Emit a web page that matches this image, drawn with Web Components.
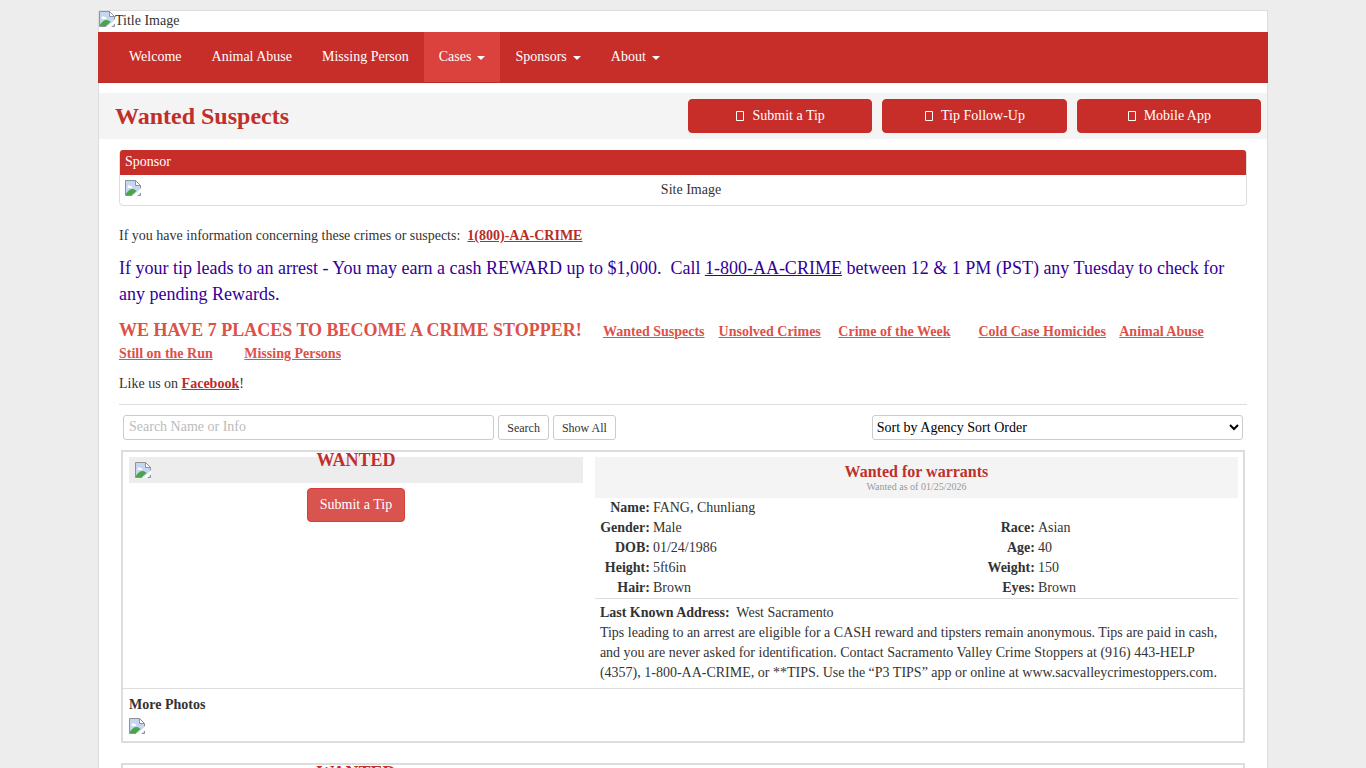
<!DOCTYPE html>
<html lang="en">
<head>
<meta charset="utf-8">
<meta name="viewport" content="width=device-width, initial-scale=1">
<title>Wanted Suspects</title>
<style>
    html {
        --red: #c72d29;
        --red-dark: #b5302b;
        --red-light: #db413d;
        --line: #ddd;
        --shade: #f4f4f4;
        background: #ededed;
    }
    body {
        margin: 0;
        color: #333;
        font: 14px/20px "Liberation Serif", "Times New Roman", serif;
    }
</style>
</head>
<body>

<site-frame>
    <site-nav slot="nav">
        <nav-item>Welcome</nav-item>
        <nav-item>Animal Abuse</nav-item>
        <nav-item>Missing Person</nav-item>
        <nav-item menu active>Cases</nav-item>
        <nav-item menu>Sponsors</nav-item>
        <nav-item menu>About</nav-item>
    </site-nav>
    <page-heading slot="heading">
        Wanted Suspects
        <tip-button slot="actions" icon block>Submit a Tip</tip-button>
        <tip-button slot="actions" icon block>Tip Follow-Up</tip-button>
        <tip-button slot="actions" icon block>Mobile App</tip-button>
    </page-heading>
    <sponsor-panel><span slot="title">Sponsor</span>Site Image</sponsor-panel>
    <crime-notice></crime-notice>
    <search-bar></search-bar>
    <suspect-card>
        <span slot="crime">Wanted for warrants</span>
        <span slot="since">Wanted as of 01/25/2026</span>
        <span slot="name">FANG, Chunliang</span>
        <span slot="gender">Male</span>
        <span slot="race">Asian</span>
        <span slot="dob">01/24/1986</span>
        <span slot="age">40</span>
        <span slot="height">5ft6in</span>
        <span slot="weight">150</span>
        <span slot="hair">Brown</span>
        <span slot="eyes">Brown</span>
        <span slot="address">West Sacramento</span>
        Tips leading to an arrest are eligible for a CASH reward and tipsters remain anonymous. Tips are paid in cash, and you are never asked for identification. Contact Sacramento Valley Crime Stoppers at (916) 443-HELP (4357), 1-800-AA-CRIME, or **TIPS. Use the “P3 TIPS” app or online at www.sacvalleycrimestoppers.com.
    </suspect-card>
    <suspect-card></suspect-card>
</site-frame>

<!-- page frame -->
<template id="site-frame">
    <style>
        :host {
            display: block;
            box-sizing: border-box;
            max-width: 1170px;
            margin: 10px auto 0;
            border: 1px solid var(--line);
            background: #fff;
        }
        .banner { display: flex; height: 21px; }
        .banner span { line-height: 19px; }
        main { padding: 11px 20px 20px; }
    </style>
    <header>
        <div class="banner"><missing-image></missing-image><span>Title Image</span></div>
        <slot name="nav"></slot>
    </header>
    <slot name="heading"></slot>
    <main><slot></slot></main>
</template>

<!-- placeholder for a picture that did not load -->
<template id="missing-image">
    <style>
        :host { display: block; flex: none; width: 16px; height: 16px; }
        svg { display: block; }
    </style>
    <svg width="16" height="16" viewBox="0 0 16 16" aria-hidden="true">
        <path d="M.5.5h10l5 5v10H.5z" fill="#c5d6f3"/>
        <path d="M2.500 7c0-2 2.500-2.500 3-1 2-.5 2.500 2 1 2H3c-.5 0-.5-.5-.5-1z" fill="#fff"/>
        <path d="M1 15v-1.500C3 11 5 9 7.500 9c2 0 3 1 4 2l-4.500 4z" fill="#4aa545"/>
        <path d="M.5 15.500V.5h10l5 5v3M.5 15.500H7M12.500 15.500h3V13" fill="none" stroke="#8d939b"/>
        <path d="M10.500.5v5h5z" fill="#fff" stroke="#8d939b"/>
        <path d="M16 8.500 7.500 16H12l4-4z" fill="#fff"/>
    </svg>
</template>

<!-- main menu -->
<template id="site-nav">
    <style>
        :host {
            display: block;
            margin: 0 -1px;
            background: var(--red);
            border-bottom: 1px solid var(--red-dark);
        }
        nav { display: flex; padding: 0 16px; }
    </style>
    <nav><slot></slot></nav>
</template>

<template id="nav-item">
    <style>
        :host { display: block; }
        a {
            display: flex;
            align-items: center;
            gap: 6px;
            padding: 15px;
            color: #fff;
            text-decoration: none;
        }
        :host([active]) a { background: var(--red-light); }
        i { display: none; border: 4px solid transparent; border-top-color: #fff; border-bottom: 0; }
        :host([menu]) i { display: block; margin-top: 2px; }
    </style>
    <a href="#"><slot></slot><i></i></a>
</template>

<!-- grey bar with the title and the three actions -->
<template id="page-heading">
    <style>
        :host {
            display: grid;
            grid-template-columns: 1fr 1fr;
            align-items: center;
            margin-top: 10px;
            background: var(--shade);
        }
        h1 {
            margin: 0;
            padding-left: 16px;
            color: #c02f2b;
            font-size: 24px;
            line-height: 26px;
        }
        .actions {
            display: grid;
            grid-template-columns: repeat(3, 1fr);
            gap: 10px;
            padding: 6px 6px 6px 5px;
        }
    </style>
    <h1><slot></slot></h1>
    <div class="actions"><slot name="actions"></slot></div>
</template>

<template id="tip-button">
    <style>
        :host { display: inline-block; }
        button {
            display: flex;
            align-items: center;
            justify-content: center;
            width: 100%;
            padding: 6px 12px;
            border: 1px solid #d43f3a;
            border-radius: 4px;
            background: #d9534f;
            color: #fff;
            font: inherit;
        }
        :host([block]) button { border-color: var(--red); background: var(--red); }
        svg { display: none; margin: 0 8px 0 1px; }
        :host([icon]) svg { display: block; }
    </style>
    <button type="button">
        <svg width="8" height="10" aria-hidden="true"><path d="M.5.5h7v9h-7z" fill="none" stroke="#fff"/></svg>
        <slot></slot>
    </button>
</template>

<!-- sponsor box -->
<template id="sponsor-panel">
    <style>
        :host {
            display: block;
            margin-bottom: 20px;
            border: 1px solid var(--line);
            border-radius: 4px;
        }
        header {
            margin: -1px 0 0;
            padding: 2px 5px 3px;
            border-radius: 3px 3px 0 0;
            background: var(--red);
            color: #fff;
        }
        div { display: flex; padding: 5px; }
        span { flex: 1; text-align: center; }
    </style>
    <header><slot name="title"></slot></header>
    <div><missing-image></missing-image><span><slot></slot></span></div>
</template>

<!-- text over the list -->
<template id="crime-notice">
    <style>
        :host { display: block; border-bottom: 1px solid var(--line); padding-bottom: 10px; }
        p { margin: 0 0 9px; }
        p:last-child { margin: 0; }
        a { color: #b92c28; font-weight: bold; }
        .reward { margin-bottom: 10px; color: #309; font-size: 18px; line-height: 26px; }
        .reward a { color: inherit; font-weight: normal; }
        .places { line-height: 22px; }
        .places, .places a { color: #dc5148; font-weight: bold; }
        .places a { white-space: nowrap; }
        .places strong { font-size: 18px; line-height: 26px; }
    </style>
    <p>If you have information concerning these crimes or suspects:&nbsp; <a href="#">1(800)-AA-CRIME</a></p>
    <p class="reward">If your tip leads to an arrest - You may earn a cash REWARD up to $1,000.&nbsp; Call <a href="#">1-800-AA-CRIME</a> between 12 &amp; 1 PM (PST) any Tuesday to check for any pending Rewards.</p>
    <p class="places"><strong>WE HAVE 7 PLACES TO BECOME A CRIME STOPPER!&nbsp;&nbsp;&nbsp;&nbsp;</strong> <a href="#">Wanted Suspects</a>&nbsp;&nbsp;&nbsp; <a href="#">Unsolved Crimes</a>&nbsp;&nbsp;&nbsp;&nbsp; <a href="#">Crime of the Week</a>&nbsp;&nbsp;&nbsp;&nbsp;&nbsp;&nbsp;&nbsp; <a href="#">Cold Case Homicides</a>&nbsp;&nbsp;&nbsp; <a href="#">Animal Abuse</a> <a href="#">Still on the Run</a>&nbsp;&nbsp;&nbsp;&nbsp;&nbsp;&nbsp;&nbsp;&nbsp; <a href="#">Missing Persons</a></p>
    <p>Like us on <a href="#">Facebook</a>!</p>
</template>

<!-- search and sort -->
<template id="search-bar">
    <style>
        :host { display: block; margin: 10px 4px; }
        form { display: flex; gap: 4px; }
        input, select, button {
            box-sizing: border-box;
            height: 25px;
            margin: 0;
            border: 1px solid #ccc;
            border-radius: 3px;
            background: #fff;
            font: inherit;
        }
        input, select { width: calc(33.33% - 2px); }
        input { padding: 0 5px 2px; color: #333; }
        input::placeholder { color: #bbb; }
        select { margin-left: auto; padding: 0; color: #000; }
        button { padding: 0 8px; color: #333; font-size: 12px; }
    </style>
    <form>
        <input type="text" placeholder="Search Name or Info" aria-label="Search Name or Info">
        <button type="button">Search</button>
        <button type="button">Show All</button>
        <select aria-label="Sort order">
            <option>Sort by Agency Sort Order</option>
        </select>
    </form>
</template>

<!-- one wanted person -->
<template id="suspect-card">
    <style>
        :host { display: block; margin: 0 2px 20px; border: 2px solid var(--line); }
        .row { display: grid; grid-template-columns: 41.6% 1fr; min-height: 236px; }
        .photo, .info { min-width: 0; padding: 5px 6px; }
        .info { padding-right: 5px; }
        .photo { text-align: center; }
        .frame { position: relative; height: 16px; margin-bottom: 5px; padding: 5px 6px; background: #ededed; }
        .frame b {
            position: absolute;
            top: -7px;
            left: 0;
            right: 0;
            color: #c02f2b;
            font-size: 18px;
        }
        header { padding: 5px 5px 6px; background: var(--shade); text-align: center; }
        h2 { margin: 0; color: #c02f2b; font-size: 16px; line-height: 20px; }
        small { display: block; color: #999; font-size: 10px; line-height: 10px; }
        table { width: 100%; table-layout: fixed; border-collapse: collapse; }
        .label { width: 55px; }
        .wide { width: 51%; }
        .label.far { width: 57px; }
        th { padding: 0; text-align: right; }
        td { padding: 0 0 0 3px; }
        .remarks { padding: 4px 5px 0; border-top: 1px solid var(--line); }
        .more { padding: 6px 6px 7px; border-top: 1px solid var(--line); }
        .more missing-image { margin-top: 3px; }
    </style>
    <div class="row">
        <div class="photo">
            <div class="frame"><missing-image></missing-image><b>WANTED</b></div>
            <tip-button>Submit a Tip</tip-button>
        </div>
        <div class="info">
            <header>
                <h2><slot name="crime"></slot></h2>
                <small><slot name="since"></slot></small>
            </header>
            <table>
                <colgroup><col class="label"><col class="wide"><col class="label far"><col></colgroup>
                <tr><th>Name:</th><td colspan="3"><slot name="name"></slot></td></tr>
                <tr><th>Gender:</th><td><slot name="gender"></slot></td><th>Race:</th><td><slot name="race"></slot></td></tr>
                <tr><th>DOB:</th><td><slot name="dob"></slot></td><th>Age:</th><td><slot name="age"></slot></td></tr>
                <tr><th>Height:</th><td><slot name="height"></slot></td><th>Weight:</th><td><slot name="weight"></slot></td></tr>
                <tr><th>Hair:</th><td><slot name="hair"></slot></td><th>Eyes:</th><td><slot name="eyes"></slot></td></tr>
            </table>
            <div class="remarks">
                <div><b>Last Known Address:</b>&nbsp; <slot name="address"></slot></div>
                <slot></slot>
            </div>
        </div>
    </div>
    <div class="more"><b>More Photos</b><missing-image></missing-image></div>
</template>

<script>
"use strict";

// every element clones the template that has its own tag name as id
class TemplateElement extends HTMLElement {
    connectedCallback() {
        if (this.shadowRoot) return;
        const tmpl = document.getElementById(this.localName);
        this.attachShadow({mode: "open"}).append(tmpl.content.cloneNode(true));
    }
}

customElements.define("missing-image", class extends TemplateElement {});
customElements.define("nav-item", class extends TemplateElement {});
customElements.define("site-nav", class extends TemplateElement {});
customElements.define("tip-button", class extends TemplateElement {});
customElements.define("page-heading", class extends TemplateElement {});
customElements.define("sponsor-panel", class extends TemplateElement {});
customElements.define("crime-notice", class extends TemplateElement {});
customElements.define("search-bar", class extends TemplateElement {});
customElements.define("suspect-card", class extends TemplateElement {});
customElements.define("site-frame", class extends TemplateElement {});
</script>
</body>
</html>
